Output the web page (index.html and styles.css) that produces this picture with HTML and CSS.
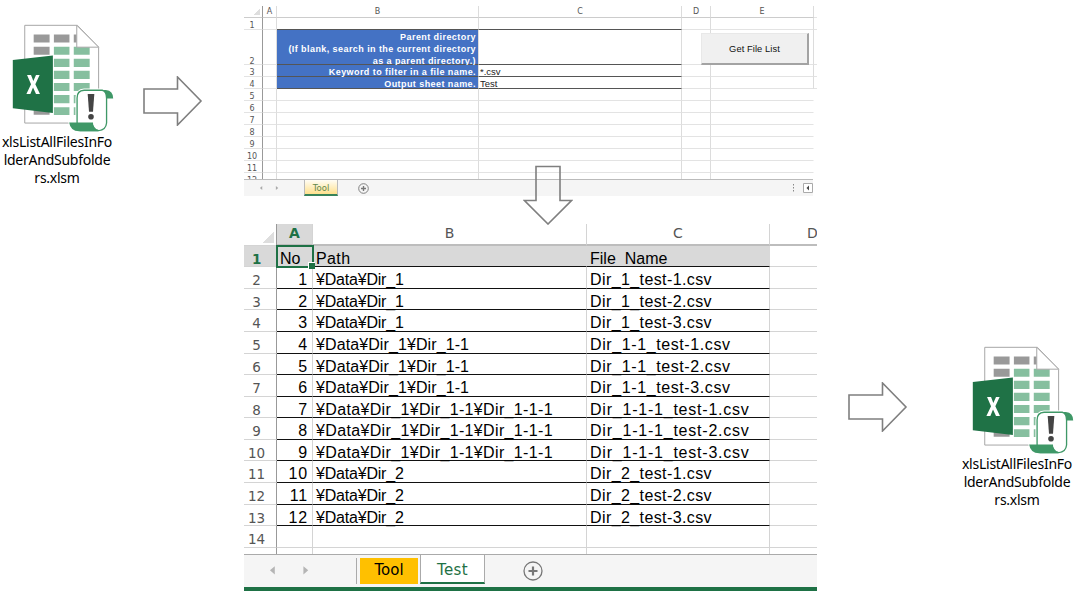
FILE: index.html
```html
<!DOCTYPE html>
<html lang="en">
<head>
<meta charset="utf-8">
<title>File list tool</title>
<link rel="stylesheet" href="styles.css">
</head>
<body>
<svg class="defs" width="0" height="0">
  <symbol id="xlsm" viewBox="36 24 308 332">
    <path d="M73 31H232L296 97V326H73Z" fill="#fff" stroke="#a6a6a6" stroke-width="3"/>
    <g fill="#999">
      <path d="M100 59h48v24h-48zM161 59h47v24h-47zM221 59h9v24h-9zM100 96h48v24h-48zM100 278h48v23h-48z"/>
    </g>
    <path fill="#86bf9f" d="M161 96h47v24h-47zM221 96h48v24h-48zM161 132h47v25h-47zM221 132h48v25h-48zM161 168h47v25h-47zM221 168h48v25h-48zM161 205h47v24h-47zM221 205h48v24h-48zM161 241h47v25h-47zM221 241h48v25h-48zM161 278h47v24h-47zM221 278h48v24h-48z"/>
    <path d="M230 31V97H296Z" fill="#fff" stroke="#a6a6a6" stroke-width="3"/>
    <path d="M37 136L158 122V296L37 281Z" fill="#1f7246"/>
    <path fill="#fff" d="M80 181h12l7 18 8-18h11l-13 28 14 29h-12l-9-19-8 19H78l14-29z"/>
    <path fill="#fff" d="M226 320V250q0-26 26-28h88q4 8 4 31h-22v72q0 28-30 30h-62q-24-4-26-35z"/>
    <path fill="#3f9867" d="M300 226h18q22 2 22 26h-21q0-18-19-26z"/>
    <path fill="#fff" stroke="#3f9867" stroke-width="4" d="M231 325V250q0-22 21-23h55q13 3 13 24v75q-2 21-24 23H240z"/>
    <path fill="#3f9867" d="M207 324h72q1 15 16 18v9h-58q-26-1-30-27z"/>
    <path fill="#fff" d="M279 319q9-7 19-2 0 9 16 10-4 18-18 19-17-2-17-27z"/>
    <path fill="#444" d="M263 238h20l-4 54h-12z"/><circle cx="273" cy="307" r="8.500" fill="#444"/>
  </symbol>
  <symbol id="arrow" viewBox="0 0 60 50">
    <path d="M1 13H34.500V1L58 25 34.500 49V37H1Z" fill="#fff" stroke="#7f7f7f" stroke-width="1.600"/>
  </symbol>
</svg>
<main class="canvas">
  <section class="side source">
    <figure class="file">
      <svg class="file-icon"><use href="#xlsm"/></svg>
      <figcaption>xlsListAllFilesInFo<br>lderAndSubfolde<br>rs.xlsm</figcaption>
    </figure>
    <svg class="arrow"><use href="#arrow"/></svg>
  </section>

  <section class="sheets">
    <div class="tool">
      <div class="tool-grid">
        <div class="t-row t-head edge"><b class="corner"></b><i>A</i><i>B</i><i>C</i><i>D</i><i>E</i></div>
        <div class="t-row edge"><b>1</b><i></i><i></i><i></i><i></i><i></i></div>
        <div class="t-row tall rule edge"><b>2</b><i></i><i class="label">Parent directory<br>(If blank, search in the current directory<br>as a parent directory.)</i><i></i><i></i><i></i></div>
        <div class="t-row rule edge"><b>3</b><i></i><i class="label keyword">Keyword to filter in a file name.</i><i class="value">*.csv</i><i></i><i></i></div>
        <div class="t-row rule edge"><b>4</b><i></i><i class="label output">Output sheet name.</i><i class="value">Test</i><i></i><i></i></div>
        <div class="t-row"><b>5</b><i></i><i></i><i></i><i></i><i></i></div>
        <div class="t-row"><b>6</b><i></i><i></i><i></i><i></i><i></i></div>
        <div class="t-row"><b>7</b><i></i><i></i><i></i><i></i><i></i></div>
        <div class="t-row"><b>8</b><i></i><i></i><i></i><i></i><i></i></div>
        <div class="t-row"><b>9</b><i></i><i></i><i></i><i></i><i></i></div>
        <div class="t-row"><b>10</b><i></i><i></i><i></i><i></i><i></i></div>
        <div class="t-row"><b>11</b><i></i><i></i><i></i><i></i><i></i></div>
        <div class="t-row"><b>12</b><i></i><i></i><i></i><i></i><i></i></div>
      </div>
      <button class="run">Get File List</button>
      <div class="t-tabs">
        <svg class="nav" viewBox="0 0 60 17"><path d="M17.500 6.500v4l-2.500-2zM32 6.500v4l2.500-2z" fill="#aaa"/></svg>
        <span class="t-tab">Tool</span>
        <svg class="plus" viewBox="0 0 24 24"><circle cx="12" cy="12" r="10.500"/><path d="M6.500 12h11M12 6.500v11" stroke-width="3"/></svg>
        <svg class="scroll" viewBox="0 0 21 12"><path d="M1 2h1v1.500H1zM1 5h1v1.500H1zM1 8h1v1.500H1z" fill="#888"/><path d="M11.500 1.500h9v9h-9z" fill="#fff" stroke="#aaa"/><path d="M17 3.500v5L14.500 6z" fill="#444"/></svg>
      </div>
    </div>

    <div class="list">
      <div class="list-grid">
        <div class="row head"><b class="corner"></b><span class="active">A</span><span>B</span><span>C</span><span class="d">D</span></div>
        <div class="row title"><b>1</b><span class="selected">No</span><span>Path</span><span>File&nbsp; Name</span><span></span></div>
        <div class="row l1"><b>2</b><span>1</span><span>¥Data¥Dir_1</span><span>Dir_1_test-1.csv</span><span></span></div>
        <div class="row l1"><b>3</b><span>2</span><span>¥Data¥Dir_1</span><span>Dir_1_test-2.csv</span><span></span></div>
        <div class="row l1"><b>4</b><span>3</span><span>¥Data¥Dir_1</span><span>Dir_1_test-3.csv</span><span></span></div>
        <div class="row l2"><b>5</b><span>4</span><span>¥Data¥Dir_1¥Dir_1-1</span><span>Dir_1-1_test-1.csv</span><span></span></div>
        <div class="row l2"><b>6</b><span>5</span><span>¥Data¥Dir_1¥Dir_1-1</span><span>Dir_1-1_test-2.csv</span><span></span></div>
        <div class="row l2"><b>7</b><span>6</span><span>¥Data¥Dir_1¥Dir_1-1</span><span>Dir_1-1_test-3.csv</span><span></span></div>
        <div class="row l3"><b>8</b><span>7</span><span>¥Data¥Dir_1¥Dir_1-1¥Dir_1-1-1</span><span>Dir_1-1-1_test-1.csv</span><span></span></div>
        <div class="row l3"><b>9</b><span>8</span><span>¥Data¥Dir_1¥Dir_1-1¥Dir_1-1-1</span><span>Dir_1-1-1_test-2.csv</span><span></span></div>
        <div class="row l3"><b>10</b><span>9</span><span>¥Data¥Dir_1¥Dir_1-1¥Dir_1-1-1</span><span>Dir_1-1-1_test-3.csv</span><span></span></div>
        <div class="row l1"><b>11</b><span>10</span><span>¥Data¥Dir_2</span><span>Dir_2_test-1.csv</span><span></span></div>
        <div class="row l1"><b>12</b><span>11</span><span>¥Data¥Dir_2</span><span>Dir_2_test-2.csv</span><span></span></div>
        <div class="row l1"><b>13</b><span>12</span><span>¥Data¥Dir_2</span><span>Dir_2_test-3.csv</span><span></span></div>
        <div class="row"><b>14</b><span></span><span></span><span></span><span></span></div>
        <div class="row"><b></b><span></span><span></span><span></span><span></span></div>
      </div>
      <div class="tabs">
        <svg class="nav" viewBox="0 0 112 33"><path d="M30 11.500v8.500l-5-4.250zM59.500 11.500v8.500l5-4.250z" fill="#b5b5b5"/></svg>
        <span class="tab-tool">Tool</span>
        <span class="tab-test">Test</span>
        <svg class="plus" viewBox="0 0 20 20"><circle cx="10" cy="10" r="9"/><path d="M5.500 10h9M10 5.500v9" stroke-width="2.200"/></svg>
      </div>
    </div>
    <svg class="down" viewBox="0 0 50 60"><path d="M13 1.500H37V35.500H48.500L25 59 1.500 35.500H13Z" fill="none" stroke="#7f7f7f" stroke-width="1.600"/></svg>
  </section>

  <section class="side result">
    <svg class="arrow"><use href="#arrow"/></svg>
    <figure class="file">
      <svg class="file-icon"><use href="#xlsm"/></svg>
      <figcaption>xlsListAllFilesInFo<br>lderAndSubfolde<br>rs.xlsm</figcaption>
    </figure>
  </section>
</main>
</body>
</html>
```
FILE: styles.css
```css
* { box-sizing: border-box; }
body { margin: 0; background: #fff; color: #000; font-family: "Liberation Sans", Arial, sans-serif; overflow: hidden; }
b, i { font-weight: normal; font-style: normal; }
svg { display: block; }
.defs { position: absolute; }
.canvas { display: grid; grid-template-columns: 244px 573px 266px; height: 605px; }

/* files and arrows */
.side { display: flex; align-items: flex-start; }
.source { padding-top: 23px; gap: 29px; }
.source .arrow { margin-top: 53px; }
.result { padding: 345px 0 0 31px; gap: 52px; }
.result .arrow { margin-top: 37px; }
.arrow { width: 60px; height: 50px; flex: none; }
.file { margin: 0; width: 114px; flex: none; }
.file-icon { width: 103px; height: 110px; margin-left: 12px; }
.file figcaption { font: 14px/18px "Noto Sans", sans-serif; letter-spacing: -.25px; text-align: center; white-space: nowrap; margin-top: -.5px; }

.sheets { position: relative; display: flex; flex-direction: column; padding-top: 6px; }
.down { position: absolute; left: 279px; top: 165px; width: 50px; height: 60px; }

/* tool sheet */
.tool { position: relative; height: 190px; margin-bottom: 28px; overflow: hidden; }
.tool-grid { height: 173px; overflow: hidden; }
.t-row { display: grid; grid-template-columns: 19px 14px 202px 203px 29px 103px 3px; grid-template-rows: 100%; height: 11.950px; font: 8px/11px "DejaVu Sans", sans-serif; color: #555; }
.t-row > * { border-right: 1px solid #dcdcdc; border-bottom: 1px solid #e3e3e3; }
.t-row > b { text-align: center; padding: 2px 2px 0 0; border-right-color: #999; }
.t-row:not(.edge) > :last-child { border-right-color: transparent; }
.edge::after { content: ""; border-bottom: 1px solid #e3e3e3; }
.t-head { height: 12px; text-align: center; }
.t-head > * { border-bottom-color: #ccc; line-height: 11px; }
.t-head .corner, .head .corner { padding: 0; background: linear-gradient(135deg, transparent 50%, #dedede 50%) no-repeat right 2px bottom 2px / 6px 6px; }
.tall { height: 35.200px; }
.tall > b { padding-top: 26px; }
.rule > :nth-child(3), .rule > :nth-child(4), .t-head + .t-row > :nth-child(3), .t-head + .t-row > :nth-child(4) { border-bottom-color: #555; }
.t-row .label { background: #4472c4; color: #fff; text-align: right; font: bold 9px/12px "Liberation Sans", sans-serif; letter-spacing: .43px; padding-right: 2px; white-space: nowrap; }
.tall .label { padding-top: 1px; }
.t-row .keyword, .t-row .output { line-height: 14px; }
.t-row .value { color: #222; font: 9.500px/14px "Liberation Sans", sans-serif; padding-left: 1px; }
.run { position: absolute; left: 457px; top: 27px; width: 108px; height: 32px; padding: 0; border: 1px solid #e8e8e8; border-right: 2px solid #a3a3a3; border-bottom: 2px solid #a3a3a3; background: #f0f0f0; color: #111; font: 9.300px "Liberation Sans", sans-serif; letter-spacing: .1px; }
.t-tabs { display: flex; height: 17px; background: #f5f5f5; border-top: 1px solid #bbb; margin-right: 4px; }
.t-tabs .nav { width: 60px; height: 16px; }
.t-tab { width: 34px; height: 16px; border: 1px solid #bbb; border-top: 0; border-bottom: 2px solid #38835a; background: linear-gradient(#fffdf5, #ffe18d); color: #63884b; font: 8.500px/16px "DejaVu Sans", sans-serif; text-align: center; }
.plus { fill: none; stroke: #777; stroke-width: 1.300; }
.t-tabs .plus { width: 11px; height: 11px; margin: 3px 0 0 20px; stroke-width: 2; }
.scroll { width: 21px; height: 12px; margin: 2px 0 0 auto; }

/* file list sheet */
.list { width: 573px; }
.list-grid { height: 330px; overflow: hidden; }
.row { display: grid; grid-template-columns: 33px 36px 274px 183px 47px; grid-template-rows: 100%; height: 21.590px; font-size: 16px; line-height: 25px; white-space: nowrap; }
.row > * { border-right: 1px solid #d4d4d4; border-bottom: 1px solid #d4d4d4; }
.row > :last-child { border-right: 0; }
.row > b { font: 13.500px/26px "DejaVu Sans", sans-serif; color: #555; text-align: center; padding-right: 7px; border-right-color: #999; letter-spacing: -.2px; }
.row > span { padding-left: 3px; }
.row > span:nth-child(2) { text-align: right; padding-right: 4px; letter-spacing: .8px; }
.l1 > span, .l2 > span, .l3 > span { border-bottom-color: #111; }
.l1 > :last-child, .l2 > :last-child, .l3 > :last-child { border-bottom-color: #d4d4d4; }
.l1 > :nth-child(3) { letter-spacing: -.2px; }
.l2 > :nth-child(3) { letter-spacing: .1px; }
.l3 > :nth-child(3) { letter-spacing: .350px; }
.l1 > :nth-child(4) { letter-spacing: .4px; }
.l2 > :nth-child(4) { letter-spacing: .6px; }
.l3 > :nth-child(4) { letter-spacing: .780px; }
.row.head { height: 22px; }
.head > span, .head > span:nth-child(2) { font: 14px/19px "DejaVu Sans", sans-serif; text-align: center; color: #555; padding: 0; border-bottom: 2px solid #bdbdbd; letter-spacing: 0; }
.head .corner { background-size: 12px 12px; }
.head > .d { text-align: left; padding-left: 37px; overflow: hidden; }
.head > .active:nth-child(2) { background: #d9d9d9; color: #1e7145; font-weight: bold; }
.row.title { height: 21.200px; }
.title > b { background: #d9d9d9; color: #1e7145; font-weight: bold; }
.title > span { background: #d9d9d9; border-bottom-color: #111; border-right-color: #d9d9d9; }
.title > :nth-child(3) { letter-spacing: .4px; }
.title > span:last-child { background: #fff; border-bottom-color: #d4d4d4; }
.title > .selected:nth-child(2) { position: relative; outline: 2px solid #1e7145; outline-offset: -1px; text-align: left; letter-spacing: 0; }
.selected::after { content: ""; position: absolute; right: -3px; bottom: -3px; width: 6px; height: 6px; background: #1e7145; border: solid #fff; border-width: 1px 0 0 1px; }
.tabs { display: flex; height: 37px; background: #f5f5f5; border-top: 1px solid #aaa; border-bottom: 4px solid #1e7145; font: 15px/31px "DejaVu Sans", sans-serif; text-align: center; }
.tabs .nav { width: 112px; height: 32px; }
.tab-tool { width: 65px; height: 26px; margin-top: 3px; border-left: 1px solid #aaa; box-shadow: inset 3px 0 #f5f5f5, inset -3px 0 #f5f5f5; background: #ffc000; line-height: 25px; margin-right: -1px; }
.tab-test { width: 65px; height: 29px; background: #fff; color: #1e7145; border: 1px solid #aaa; border-top: 0; border-bottom: 2px solid #1e7145; letter-spacing: .4px; }
.tabs .plus { width: 20px; height: 20px; margin: 6px 0 0 38px; }
```
